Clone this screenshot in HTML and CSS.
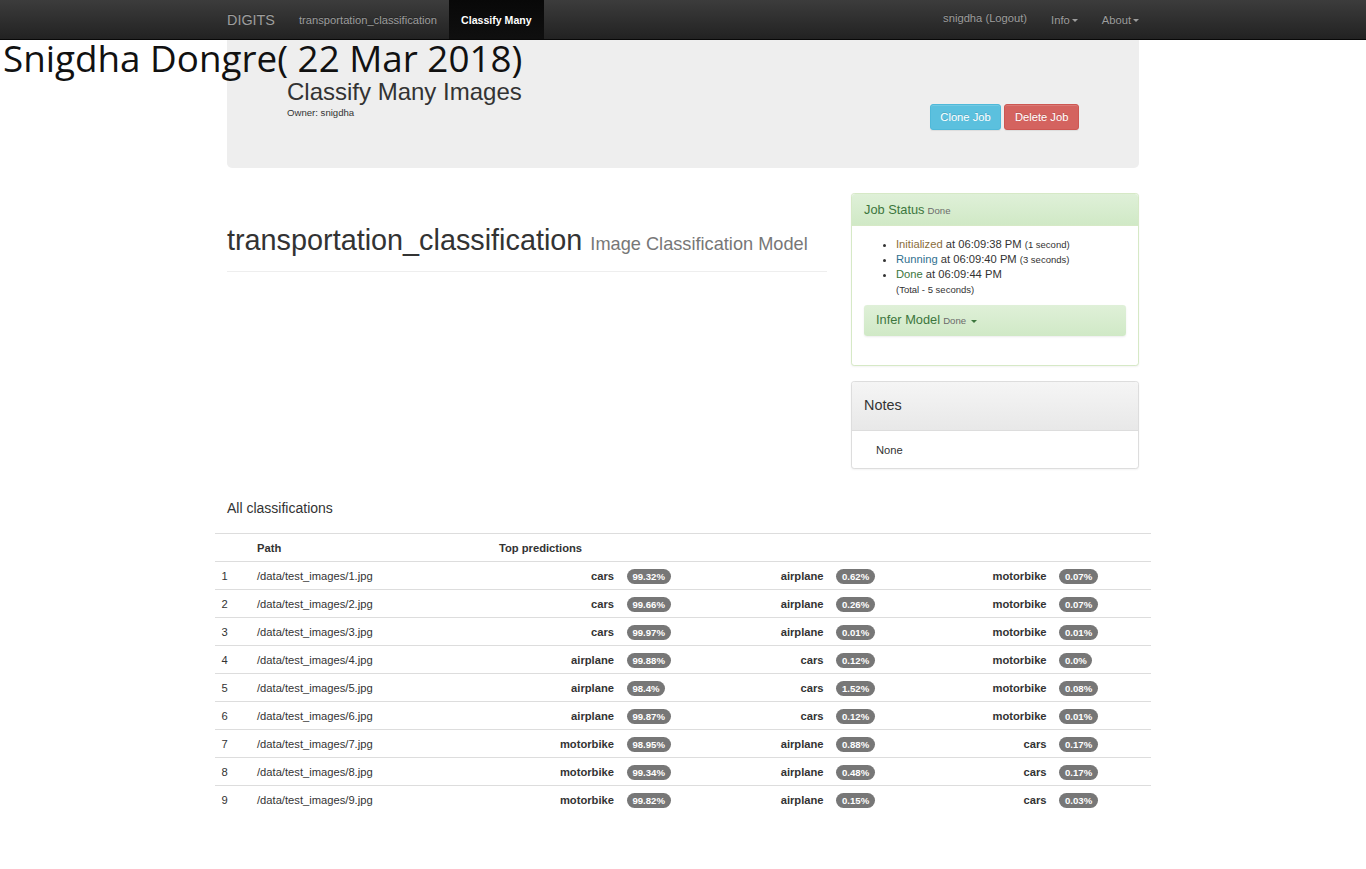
FILE: index.html
```html
<!DOCTYPE html>
<html>
<head>
<meta charset="utf-8">
<title>Classify Many Images</title>
<link rel="stylesheet" href="styles.css">
</head>
<body>
<nav class="navbar">
  <div class="nav-inner">
    <div class="nav-left">
      <a class="brand">DIGITS</a>
      <a class="nav-link">transportation_classification</a>
      <a class="nav-link active">Classify Many</a>
    </div>
    <div class="nav-right">
      <a class="nav-link user">snigdha (Logout)</a>
      <a class="nav-link">Info<span class="caret"></span></a>
      <a class="nav-link">About<span class="caret"></span></a>
    </div>
  </div>
</nav>

<div class="overlay-name">Snigdha Dongre( 22 Mar 2018)</div>

<div class="container">
  <div class="jumbotron">
    <div class="jumbo-text">
      <h1 class="jumbo-title">Classify Many Images</h1>
      <div class="owner">Owner: snigdha</div>
    </div>
    <div class="jumbo-buttons">
      <a class="btn btn-info">Clone Job</a>
      <a class="btn btn-danger">Delete Job</a>
    </div>
  </div>

  <div class="row">
    <div class="col-main">
      <div class="page-header">
        <h1>transportation_classification <small>Image Classification Model</small></h1>
      </div>
    </div>
    <div class="col-side">
      <div class="panel panel-success">
        <div class="panel-heading">
          <span class="panel-title">Job Status</span> <small>Done</small>
        </div>
        <div class="panel-body">
          <ul class="status-list">
            <li><span class="st-init">Initialized</span> at 06:09:38 PM <small>(1 second)</small></li>
            <li><span class="st-run">Running</span> at 06:09:40 PM <small>(3 seconds)</small></li>
            <li><span class="st-done">Done</span> at 06:09:44 PM<br><small>(Total - 5 seconds)</small></li>
          </ul>
          <div class="infer">
            <span class="panel-title">Infer Model</span> <small>Done</small><span class="caret dark"></span>
          </div>
        </div>
      </div>

      <div class="panel panel-default">
        <div class="panel-heading notes-heading">
          <h4>Notes</h4>
        </div>
        <div class="panel-body notes-body">
          <p>None</p>
        </div>
      </div>
    </div>
  </div>

  <h4 class="section-title">All classifications</h4>

  <table class="results">
    <colgroup>
      <col class="c-num"><col class="c-path">
      <col class="c-l1"><col class="c-b1">
      <col class="c-l2"><col class="c-b2">
      <col class="c-l3"><col class="c-b3">
    </colgroup>
    <thead>
      <tr><th></th><th>Path</th><th colspan="6">Top predictions</th></tr>
    </thead>
    <tbody>
      <tr><td>1</td><td>/data/test_images/1.jpg</td><td class="lbl">cars</td><td><span class="badge">99.32%</span></td><td class="lbl">airplane</td><td><span class="badge">0.62%</span></td><td class="lbl">motorbike</td><td><span class="badge">0.07%</span></td></tr>
      <tr><td>2</td><td>/data/test_images/2.jpg</td><td class="lbl">cars</td><td><span class="badge">99.66%</span></td><td class="lbl">airplane</td><td><span class="badge">0.26%</span></td><td class="lbl">motorbike</td><td><span class="badge">0.07%</span></td></tr>
      <tr><td>3</td><td>/data/test_images/3.jpg</td><td class="lbl">cars</td><td><span class="badge">99.97%</span></td><td class="lbl">airplane</td><td><span class="badge">0.01%</span></td><td class="lbl">motorbike</td><td><span class="badge">0.01%</span></td></tr>
      <tr><td>4</td><td>/data/test_images/4.jpg</td><td class="lbl">airplane</td><td><span class="badge">99.88%</span></td><td class="lbl">cars</td><td><span class="badge">0.12%</span></td><td class="lbl">motorbike</td><td><span class="badge">0.0%</span></td></tr>
      <tr><td>5</td><td>/data/test_images/5.jpg</td><td class="lbl">airplane</td><td><span class="badge">98.4%</span></td><td class="lbl">cars</td><td><span class="badge">1.52%</span></td><td class="lbl">motorbike</td><td><span class="badge">0.08%</span></td></tr>
      <tr><td>6</td><td>/data/test_images/6.jpg</td><td class="lbl">airplane</td><td><span class="badge">99.87%</span></td><td class="lbl">cars</td><td><span class="badge">0.12%</span></td><td class="lbl">motorbike</td><td><span class="badge">0.01%</span></td></tr>
      <tr><td>7</td><td>/data/test_images/7.jpg</td><td class="lbl">motorbike</td><td><span class="badge">98.95%</span></td><td class="lbl">airplane</td><td><span class="badge">0.88%</span></td><td class="lbl">cars</td><td><span class="badge">0.17%</span></td></tr>
      <tr><td>8</td><td>/data/test_images/8.jpg</td><td class="lbl">motorbike</td><td><span class="badge">99.34%</span></td><td class="lbl">airplane</td><td><span class="badge">0.48%</span></td><td class="lbl">cars</td><td><span class="badge">0.17%</span></td></tr>
      <tr><td>9</td><td>/data/test_images/9.jpg</td><td class="lbl">motorbike</td><td><span class="badge">99.82%</span></td><td class="lbl">airplane</td><td><span class="badge">0.15%</span></td><td class="lbl">cars</td><td><span class="badge">0.03%</span></td></tr>
    </tbody>
  </table>
</div>
</body>
</html>
```

FILE: styles.css
```css
* { box-sizing: border-box; }

html, body {
  margin: 0;
  padding: 0;
}

body {
  font-family: "Liberation Sans", Arial, sans-serif;
  font-size: 11.2px;
  line-height: 16px;
  color: #333;
  background: #fff;
  position: relative;
}

a { text-decoration: none; cursor: pointer; }

/* Navbar */
.navbar {
  height: 40px;
  background: linear-gradient(to bottom, #3c3c3c 0%, #222 100%);
  border-bottom: 1px solid #080808;
}

.nav-inner {
  width: 912px;
  margin: 0 auto;
  display: flex;
  justify-content: space-between;
  height: 39px;
}

.nav-left, .nav-right {
  display: flex;
  height: 39px;
}

.nav-left { margin-left: -12px; }
.nav-right { margin-right: -12px; }

.brand {
  font-size: 14.4px;
  line-height: 16px;
  padding: 12px 12px;
  color: #9d9d9d;
  text-shadow: 0 -1px 0 rgba(0,0,0,.25);
}

.nav-link {
  font-size: 11.2px;
  line-height: 16px;
  padding: 12px 12px 11px 12px;
  color: #9d9d9d;
  text-shadow: 0 -1px 0 rgba(0,0,0,.25);
  display: flex;
  align-items: center;
}

.nav-link.user { padding-top: 10px; padding-bottom: 13px; }

.nav-link.active {
  background: linear-gradient(to bottom, #080808 0%, #0f0f0f 100%);
  color: #fff;
  font-weight: bold;
  font-size: 10.6px;
}

.caret {
  display: inline-block;
  width: 0;
  height: 0;
  margin-left: 2px;
  margin-top: 1px;
  border-top: 3.2px solid #9d9d9d;
  border-left: 3.2px solid transparent;
  border-right: 3.2px solid transparent;
}

.caret.dark {
  border-top-color: #3c763d;
  margin-left: 5px;
  vertical-align: middle;
}

/* overlay name */
.overlay-name {
  position: absolute;
  top: 33px;
  left: 3px;
  font-family: "Open Sans", sans-serif;
  font-size: 36.8px;
  line-height: 50px;
  color: #111;
  z-index: 5;
  white-space: nowrap;
}

/* Container */
.container {
  width: 912px;
  margin: 0 auto;
}

.jumbotron {
  background: #eee;
  height: 128px;
  border-radius: 0 0 5px 5px;
  padding: 39px 60px 0 60px;
  display: flex;
  justify-content: space-between;
  align-items: flex-start;
  margin-bottom: 24px;
}

.jumbo-title {
  margin: 0;
  font-size: 24px;
  line-height: 26.4px;
  font-weight: normal;
  color: #333;
}

.owner {
  margin-top: 2px;
  font-size: 9.6px;
  line-height: 12px;
  color: #333;
}

.jumbo-buttons {
  display: flex;
  gap: 3px;
  margin-top: 25px;
}

.btn {
  display: inline-block;
  font-size: 11.2px;
  line-height: 16px;
  padding: 4px 9.6px;
  border: 1px solid transparent;
  border-radius: 3px;
  color: #fff;
  text-shadow: 0 -1px 0 rgba(0,0,0,.15);
  box-shadow: inset 0 1px 0 rgba(255,255,255,.15), 0 1px 1px rgba(0,0,0,.075);
}

.btn-info {
  background: #5bc0de;
  border-color: #4fb9d9;
}

.btn-danger {
  background: #d4635f;
  border-color: #cd5752;
}

/* Row */
.row {
  display: flex;
  gap: 24px;
}

.col-main { width: 600px; }
.col-side { width: 288px; padding-top: 1px; }

.page-header {
  margin-top: 33px;
  padding-bottom: 7px;
  border-bottom: 1px solid #eee;
}

.page-header h1 {
  margin: 0 0 3px 0;
  font-size: 28.8px;
  line-height: 31.7px;
  font-weight: normal;
  color: #333;
}

.page-header h1 small {
  font-size: 18.2px;
  color: #777;
  font-weight: normal;
}

/* Panels */
.panel {
  border: 1px solid #ddd;
  border-radius: 3.2px;
  margin-bottom: 15px;
  box-shadow: 0 1px 2px rgba(0,0,0,.05);
  background: #fff;
}

.panel-success { border-color: #d6e9c6; }

.panel-heading {
  padding: 8px 12px;
  line-height: 15px;
  height: 32px;
  border-bottom: 1px solid transparent;
  border-radius: 3px 3px 0 0;
}

.panel-success > .panel-heading {
  background: linear-gradient(to bottom, #dff0d8 0%, #d0e9c6 100%);
  border-color: #d6e9c6;
  color: #3c763d;
}

.panel-title {
  font-size: 12.8px;
  line-height: 15px;
  color: #3c763d;
}

.panel-heading small, .infer small {
  font-size: 9.6px;
  line-height: 10px;
  color: #6b6b6b;
}

.panel-body { padding: 11px 12px 13px 12px; }

.status-list {
  margin: 0 0 8px 0;
  padding-left: 32px;
  line-height: 15px;
  font-size: 11.2px;
}

.status-list small { font-size: 9.5px; line-height: 10px; }

.st-init { color: #8a6d3b; }
.st-run { color: #31708f; }
.st-done { color: #3c763d; }

.infer {
  background: linear-gradient(to bottom, #dff0d8 0%, #d0e9c6 100%);
  border-radius: 3.2px;
  height: 31px;
  padding: 7px 12px 8px 12px;
  line-height: 16px;
  box-shadow: 0 1px 2px rgba(0,0,0,.08);
  margin-bottom: 16px;
}

.infer .panel-title { line-height: 16px; }

.panel-heading.notes-heading {
  height: auto;
  background: linear-gradient(to bottom, #f5f5f5 0%, #e8e8e8 100%);
  border-bottom: 1px solid #ddd;
}

.notes-heading h4 {
  margin: 8px 0;
  font-size: 14.4px;
  line-height: 15.8px;
  font-weight: normal;
  color: #333;
}

.panel-body.notes-body { padding: 11px 12px 10px 24px; }

.notes-body p { margin: 0; }

/* Section title */
.section-title {
  margin: 16px 0 17px 0;
  font-size: 14px;
  line-height: 16px;
  font-weight: normal;
  color: #333;
}

/* Table */
.results {
  width: 936px;
  margin: 0 -12px;
  border-collapse: collapse;
  table-layout: fixed;
}

.c-num { width: 35.6px; }
.c-path { width: 242px; }
.c-l1 { width: 127.8px; }
.c-b1 { width: 105.6px; }
.c-l2 { width: 104px; }
.c-b2 { width: 96px; }
.c-l3 { width: 127px; }
.c-b3 { width: 98px; }

.results th, .results td {
  padding: 6px 6.4px 5px 6.4px;
  line-height: 16px;
  font-size: 11.2px;
  border-top: 1px solid #ddd;
  text-align: left;
  vertical-align: top;
  white-space: nowrap;
}

.results th {
  font-weight: bold;
  border-bottom: 1px solid #ddd;
}

.results td.lbl {
  text-align: right;
  font-weight: bold;
}

.badge {
  display: inline-block;
  min-width: 10px;
  padding: 2.4px 5.6px;
  font-size: 9.6px;
  font-weight: bold;
  line-height: 1;
  color: #fff;
  text-align: center;
  white-space: nowrap;
  vertical-align: middle;
  background-color: #777;
  border-radius: 8px;
  margin-top: -1px;
}
```
